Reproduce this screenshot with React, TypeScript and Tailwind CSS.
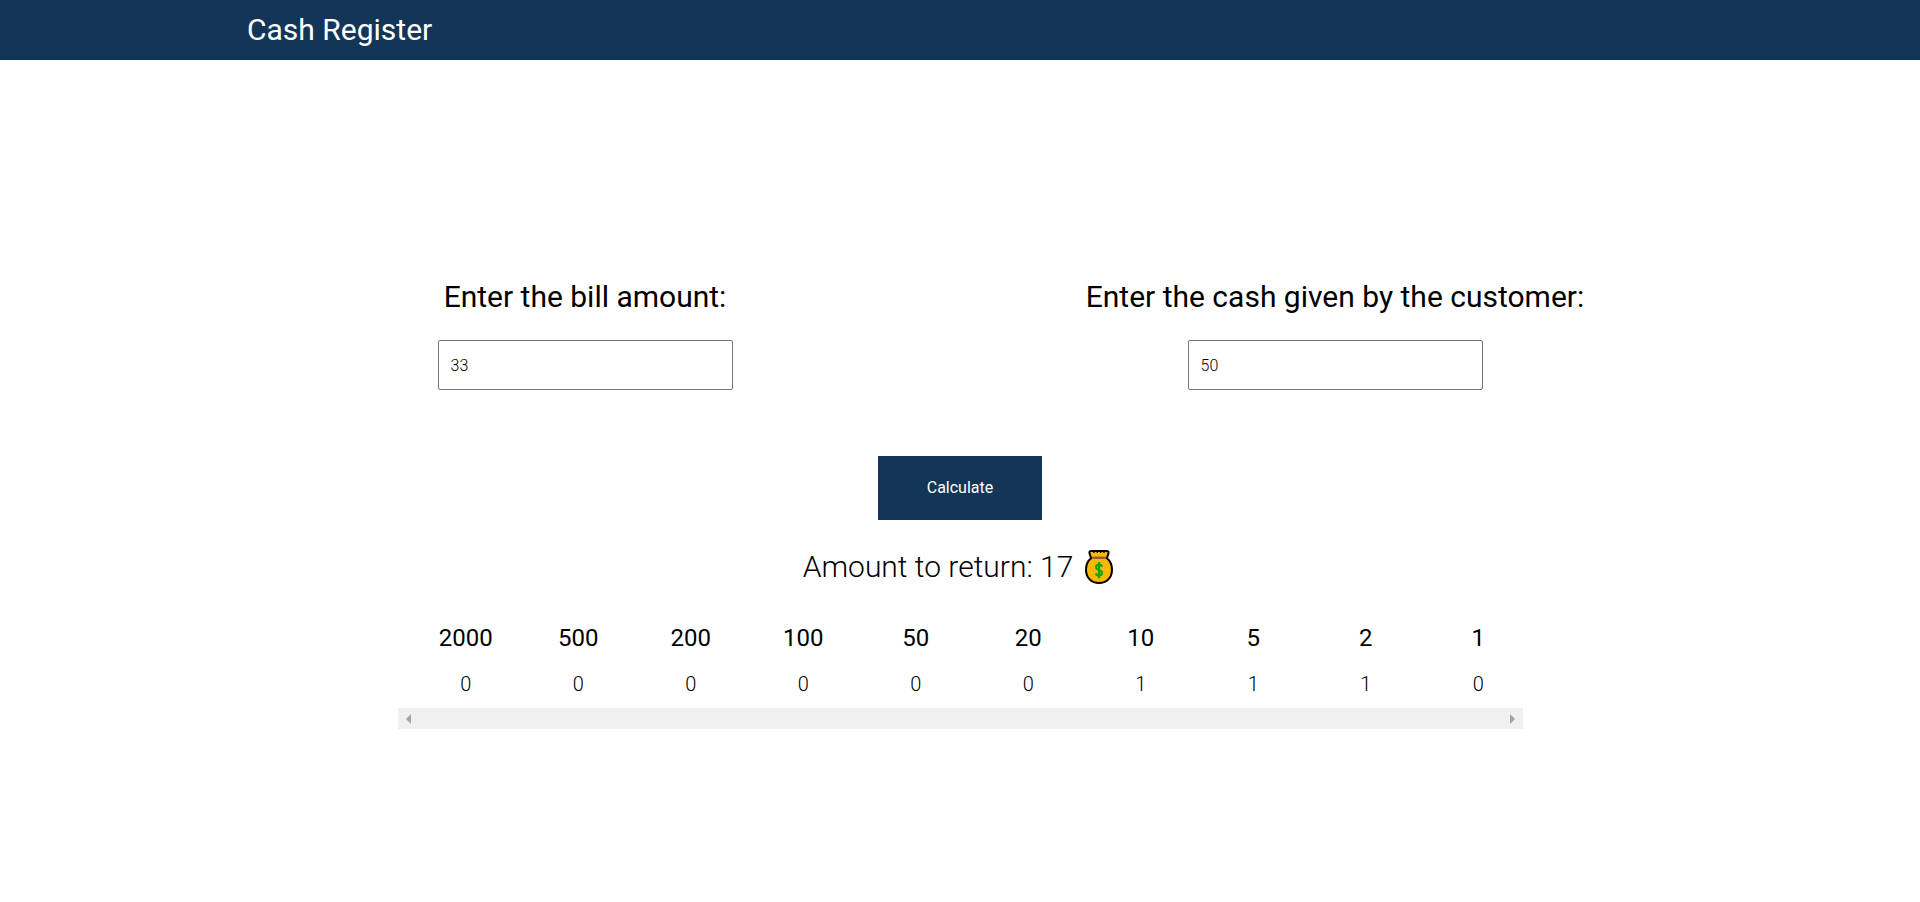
import { useState } from "react";

const DENOMINATIONS = [2000, 500, 200, 100, 50, 20, 10, 5, 2, 1];

function countNotes(amount: number): number[] {
  let rest = Math.max(0, amount);
  return DENOMINATIONS.map((value) => {
    const count = Math.floor(rest / value);
    rest -= count * value;
    return count;
  });
}

type FieldProps = {
  id: string;
  label: string;
  value: string;
  onChange: (value: string) => void;
};

function AmountField({ id, label, value, onChange }: FieldProps) {
  return (
    <div className="flex flex-col items-center gap-6">
      <label htmlFor={id} className="text-3xl leading-[38px] font-normal">
        {label}
      </label>
      <input
        id={id}
        type="text"
        inputMode="numeric"
        value={value}
        onChange={(event) => onChange(event.target.value)}
        className="h-[50px] w-full max-w-[295px] rounded-[2px] border border-[#767676] bg-white px-3 text-base font-light outline-none"
      />
    </div>
  );
}

function MoneyBag() {
  return (
    <svg viewBox="0 0 28 34" className="h-[34px] w-7" role="img" aria-label="money bag">
      <path
        d="M6.5 1H21.5Q24.3 1 23.4 3.6L21.9 8.3C25 10.6 27 14.8 27 19.8C27 28.2 21.2 33 14 33S1 28.2 1 19.8C1 14.8 3 10.6 6.1 8.3L4.6 3.6Q3.7 1 6.5 1Z"
        fill="#fdb900"
        stroke="#000"
        strokeWidth="2"
        strokeLinejoin="round"
      />
      <path d="M9 1.5V3.1M12.3 1.5V3.1M15.7 1.5V3.1M19 1.5V3.1" fill="none" stroke="#000" strokeWidth="1.3" />
      <path d="M7.2 7.8H20.8" stroke="#945a3b" strokeWidth="2.4" />
      <path
        d="M17 16.8C16.6 15.3 15.5 14.7 14 14.7C12.2 14.7 11.1 15.7 11.1 17.2C11.1 20.7 17 19.2 17 22.8C17 24.5 15.8 25.5 14 25.5C12.3 25.5 11.2 24.7 10.9 23.2M14 12V28.3"
        fill="none"
        stroke="#16a316"
        strokeWidth="2.2"
      />
    </svg>
  );
}

export default function App() {
  const [bill, setBill] = useState("33");
  const [cash, setCash] = useState("50");
  const [change, setChange] = useState(17);

  return (
    <div className="min-h-screen bg-white font-[Roboto,sans-serif] text-black">
      <header className="bg-[#133557] px-[247px] py-[11px] text-white">
        <h1 className="text-3xl leading-[38px] font-normal">Cash Register</h1>
      </header>
      <main className="mx-auto flex max-w-[1500px] flex-col items-center pt-[218px]">
        <form
          className="flex w-full flex-col items-center"
          onSubmit={(event) => {
            event.preventDefault();
            setChange(Number(cash) - Number(bill));
          }}
        >
          <div className="grid w-full grid-cols-2">
            <AmountField id="bill" label="Enter the bill amount:" value={bill} onChange={setBill} />
            <AmountField id="cash" label="Enter the cash given by the customer:" value={cash} onChange={setCash} />
          </div>
          <button type="submit" className="mt-[66px] h-16 min-w-[164px] bg-[#133557] px-12 text-base font-normal text-white">
            Calculate
          </button>
        </form>
        <p className="mt-7 flex items-center gap-3 pr-1 text-3xl leading-[38px] font-light">
          <span>Amount to return: {change}</span>
          <MoneyBag />
        </p>
        <div className="mt-7 w-3/4">
          <table className="w-full table-fixed text-center">
            <thead>
              <tr>
                {DENOMINATIONS.map((value) => (
                  <th key={value} scope="col" className="py-[10px] pl-6 text-2xl leading-7 font-normal">
                    {value}
                  </th>
                ))}
              </tr>
            </thead>
            <tbody>
              <tr>
                {countNotes(change).map((count, index) => (
                  <td key={DENOMINATIONS[index]} className="py-[10px] pl-6 text-xl leading-6 font-light">
                    {count}
                  </td>
                ))}
              </tr>
            </tbody>
          </table>
          <div className="mt-[2px] flex h-[21px] items-center justify-between bg-[#f0f0f0] px-2 text-[#a3a3a3]">
            <svg viewBox="0 0 5 10" className="h-[10px] w-[5px]" fill="currentColor" aria-hidden="true">
              <path d="M5 0V10L0 5Z" />
            </svg>
            <svg viewBox="0 0 5 10" className="h-[10px] w-[5px]" fill="currentColor" aria-hidden="true">
              <path d="M0 0V10L5 5Z" />
            </svg>
          </div>
        </div>
      </main>
    </div>
  );
}
